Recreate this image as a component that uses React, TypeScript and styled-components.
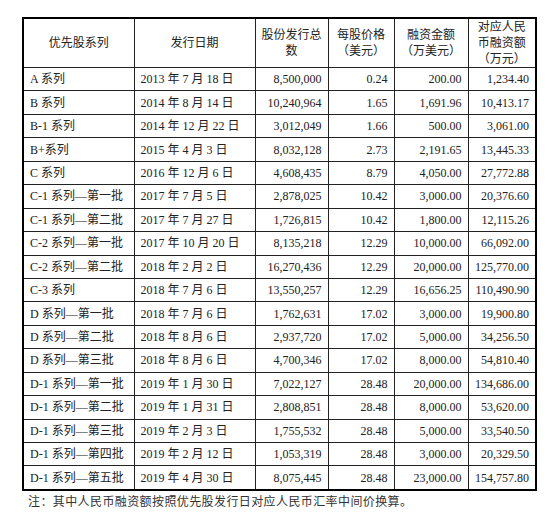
import React from "react";
import styled, { createGlobalStyle } from "styled-components";

const Global = createGlobalStyle`
  html, body { margin: 0; padding: 0; background: #fff; }
  body { font-family: "Liberation Serif", "Noto Sans CJK SC", serif; color: #222; }
`;

const Page = styled.div`
  width: 558px;
  height: 512px;
  padding: 17px 0 0 22px;
  box-sizing: border-box;
  display: flex;
  flex-direction: column;
`;

const Table = styled.table`
  width: 513px;
  table-layout: fixed;
  border-collapse: collapse;
  border: 2px solid #000;
  font-size: 12px;
`;

const HeadCell = styled.th`
  height: 46px;
  padding: 0 2px;
  border: 1px solid #222;
  font-weight: normal;
  text-align: center;
  vertical-align: middle;
  line-height: 16px;
  color: #222;
`;

const Cell = styled.td<{ $align?: "left" | "right" }>`
  height: 22.45px;
  padding: 0 6px;
  border: 1px solid #222;
  text-align: ${(p) => p.$align ?? "right"};
  vertical-align: middle;
  white-space: nowrap;
  line-height: 16px;
  color: #222;
`;

const Note = styled.div`
  margin: 3px 0 0 6px;
  font-size: 12px;
  letter-spacing: 0.4px;
  color: #333;
  line-height: 16px;
`;

const cols = [111, 121, 73, 66, 74, 68];

const rows: string[][] = [
  ["A 系列", "2013 年 7 月 18 日", "8,500,000", "0.24", "200.00", "1,234.40"],
  ["B 系列", "2014 年 8 月 14 日", "10,240,964", "1.65", "1,691.96", "10,413.17"],
  ["B-1 系列", "2014 年 12 月 22 日", "3,012,049", "1.66", "500.00", "3,061.00"],
  ["B+系列", "2015 年 4 月 3 日", "8,032,128", "2.73", "2,191.65", "13,445.33"],
  ["C 系列", "2016 年 12 月 6 日", "4,608,435", "8.79", "4,050.00", "27,772.88"],
  ["C-1 系列—第一批", "2017 年 7 月 5 日", "2,878,025", "10.42", "3,000.00", "20,376.60"],
  ["C-1 系列—第二批", "2017 年 7 月 27 日", "1,726,815", "10.42", "1,800.00", "12,115.26"],
  ["C-2 系列—第一批", "2017 年 10 月 20 日", "8,135,218", "12.29", "10,000.00", "66,092.00"],
  ["C-2 系列—第二批", "2018 年 2 月 2 日", "16,270,436", "12.29", "20,000.00", "125,770.00"],
  ["C-3 系列", "2018 年 7 月 6 日", "13,550,257", "12.29", "16,656.25", "110,490.90"],
  ["D 系列—第一批", "2018 年 7 月 6 日", "1,762,631", "17.02", "3,000.00", "19,900.80"],
  ["D 系列—第二批", "2018 年 8 月 6 日", "2,937,720", "17.02", "5,000.00", "34,256.50"],
  ["D 系列—第三批", "2018 年 8 月 6 日", "4,700,346", "17.02", "8,000.00", "54,810.40"],
  ["D-1 系列—第一批", "2019 年 1 月 30 日", "7,022,127", "28.48", "20,000.00", "134,686.00"],
  ["D-1 系列—第二批", "2019 年 1 月 31 日", "2,808,851", "28.48", "8,000.00", "53,620.00"],
  ["D-1 系列—第三批", "2019 年 2 月 3 日", "1,755,532", "28.48", "5,000.00", "33,540.50"],
  ["D-1 系列—第四批", "2019 年 2 月 12 日", "1,053,319", "28.48", "3,000.00", "20,329.50"],
  ["D-1 系列—第五批", "2019 年 4 月 30 日", "8,075,445", "28.48", "23,000.00", "154,757.80"],
];

export default function App() {
  return (
    <>
      <Global />
      <Page>
        <Table>
          <colgroup>
            {cols.map((w, i) => (
              <col key={i} style={{ width: w }} />
            ))}
          </colgroup>
          <thead>
            <tr>
              <HeadCell>优先股系列</HeadCell>
              <HeadCell>发行日期</HeadCell>
              <HeadCell>股份发行总<br />数</HeadCell>
              <HeadCell>每股价格<br />（美元）</HeadCell>
              <HeadCell>融资金额<br />（万美元）</HeadCell>
              <HeadCell>对应人民<br />币融资额<br />（万元）</HeadCell>
            </tr>
          </thead>
          <tbody>
            {rows.map((r, i) => (
              <tr key={i}>
                <Cell $align="left">{r[0]}</Cell>
                <Cell $align="left">{r[1]}</Cell>
                <Cell>{r[2]}</Cell>
                <Cell>{r[3]}</Cell>
                <Cell>{r[4]}</Cell>
                <Cell>{r[5]}</Cell>
              </tr>
            ))}
          </tbody>
        </Table>
        <Note>注：其中人民币融资额按照优先股发行日对应人民币汇率中间价换算。</Note>
      </Page>
    </>
  );
}
